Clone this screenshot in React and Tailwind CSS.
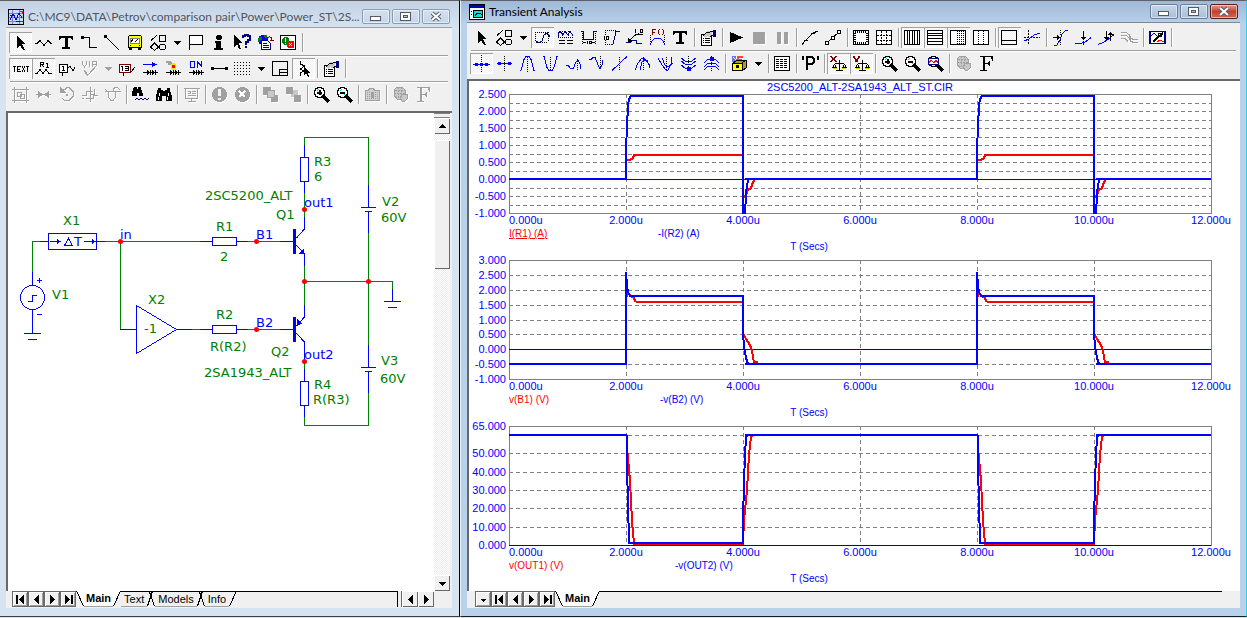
import React, { useState } from "react";

const S = ({ d, c = "#000", w = 1, dash }) => (
  <path d={d} stroke={c} strokeWidth={w} strokeDasharray={dash} fill="none" />
);
const F = ({ d, c = "#000" }) => <path d={d} fill={c} />;

const GREY = "#a0a0a0";
const BLUE = "#0000ff";
const NAVY = "#000080";

const arrow = "M5 2v12l3-3 3 5h2l-3-6h4z";
const zoomGlass = (
  <>
    <circle cx="6.5" cy="6.5" r="5" fill="#fff" stroke="#000" strokeWidth="1.5" />
    <S d="M3.5 5.5l2-2M8 9l1-1" c="#00d8e8" />
    <S d="M10 10l6 6" w={3} />
  </>
);
const scale = (
  <>
    <F d="M2 12h5v2H3zM12 12h5l-1 2h-4z" c="#d8d000" />
    <S d="M9.5 5v10M6 15.5h7M5 8.5h9M4.5 9v1M3.5 10v2M5.5 10v2M14.5 9v1M13.5 10v2M15.5 10v2M2 12.5h5M12 12.5h5" />
  </>
);
const props = (
  <>
    <path d="M1.5 5.5h10v11h-10z" fill="#fff" stroke="#000" />
    <S d="M3 9.5h1M5 9.5h5M3 11.5h1M5 11.5h5M3 13.5h1M5 13.5h5" />
    <F d="M3 6l4-4h5v4l-3 2-2-1-2 2z" c="#c8c8c8" />
    <S d="M3 7l4-4h3l3-1M10 8l3-2" />
    <F d="M13 1h3v7h-3z" c={NAVY} />
  </>
);
const shapes = (
  <>
    <S d="M1 6.5L7 1M9.5 1.5h6v6h-6zM4.5 9l4 4-4 3.5-4-3.5z" />
    <circle cx="12.5" cy="13" r="3" fill="none" stroke="#000" />
  </>
);
const globeGrey = (
  <>
    <path d="M5 1h5l3 3v5l-3 4H5L2 9V4z" fill="#c8c8c8" stroke={GREY} />
    <S d="M3 4.5h10M2 7.5h11M6.5 1v11M9.5 1v11" c={GREY} dash="2 1" />
    <path d="M9.5 8.5h6v4l-3 3h-2l-2-3z" fill="#c8c8c8" stroke={GREY} />
  </>
);
const serifF = "M2 1h13v5h-1l-1-4H7v6h3l1-2h1v5h-1l-1-2H7v6h2v1H2v-1h3V2H2z";
// Diode pair under the current, power and state icons
const diodes = (
  <>
    <S d="M1 12.5h15M8.5 10v5M13.5 10v5" />
    <F d="M5 10v5l3-2.5zM10 10v5l3-2.5z" />
  </>
);

const ICONS = {
  arrow: <F d={arrow} />,
  zigzag: <S d="M0 9.5h2l3-3 4 5 4-5 3 3h1" />,
  text: <F d="M1 2h14v4h-1l-1-2H9.5v9H12v2H4v-2h2.5V4H3L2 6H1z" />,
  wire: (
    <>
      <F d="M0 2h3v3H0z" />
      <S d="M2 3.5h6.5v10H16" />
    </>
  ),
  diagonal: (
    <>
      <F d="M0 1h3v3H0z" />
      <S d="M1 2l14 14" />
    </>
  ),
  face: (
    <>
      <path d="M1.5 2.5l1-1h11l1 1v11h-13z" fill="#ffff00" stroke="#000" />
      <path d="M3.5 4.5h9v5h-9z" fill="#fff" stroke="#808080" />
      <S d="M4 7.5l2-2M8 8l3-3M3 11.5h1M12 11.5h1" />
      <F d="M2 14h3v2H2zM11 14h3v2h-3z" />
    </>
  ),
  shapes,
  flag: (
    <>
      <path d="M1.5 1.5h13v9h-13z" fill="#fff" stroke="#000" />
      <S d="M1.5 10v6" />
    </>
  ),
  info: <F d="M6 1h4v1h1v3h-1v1H6V5H5V2h1zM4 7h6v7h2v2H3v-2h2V9H4z" />,
  help: (
    <>
      <F d="M0 1v12l3-3 2 5h2L5 9h3z" />
      <S d="M9 4V2h2V1h3v1h2v4h-2v2h-2v3M11 13h2" c={NAVY} w={2} />
    </>
  ),
  globeDoc: (
    <>
      <circle cx="6" cy="6" r="5" fill="#0000ff" />
      <F d="M2 3h3v3H3v2H1V5zM7 1h3v3H8z" c="#008000" />
      <S d="M10 4c3-2 5-1 5 2M13 6h4" c="#800000" />
      <path d="M4.5 6.5h6l3 3v6h-9z" fill="#fff" stroke={NAVY} />
      <S d="M6 9.5h4M6 11.5h6M6 13.5h6" c={NAVY} />
    </>
  ),
  enable: (
    <>
      <path d="M.5 1.5h15v14H.5z" fill="#fff" stroke="#000" />
      <F d="M4 3h3l2 2v4l-2 2H4L2 9V5z" c="#008000" />
      <S d="M5.5 4v4M5.5 9v1" c="#fff" />
      <F d="M8 7h5l1 1v5l-1 1H8l-1-1V8z" c="#ff0000" />
      <S d="M9 9l3 3M12 9l-3 3" c="#fff" />
    </>
  ),
  textLabel: (
    <S d="M.5 6.5h3M2 6v6M8.5 6.5h-3.5v5h3.5M5 9h3M10 6l3 6M13 6l-3 6M14 6.5h3M15.5 6v6" />
  ),
  r1: (
    <>
      <S d="M5.5 7V2.5h3v2h-3M7 5l2 2M11 3.5h1.5V7M11 7h3" />
      <S d="M0 13.5h2l3-4 3 4 3-4 3 4h3" />
    </>
  ),
  node1: (
    <>
      <path d="M1.5 4.5h8v8h-8z" fill="#fff" stroke="#000" />
      <S d="M5.5 6v5M4 6.5h2M4 10.5h3M4.5 13v3M9 8.5l3-2 3 4 2-3" />
    </>
  ),
  vip: <S d="M1.5 1v3l2 3 2-3V1M8.5 1v6M11.5 7V1.5h4v3h-4M3 10l4 5 9-10M3 11l4 5" c={GREY} />,
  pin13: (
    <>
      <path d="M.5 4.5h11v8H.5z" fill="#fff" stroke="#800000" />
      <S d="M3.5 6v5M2 6.5h2M6 6.5h3v4H6M6 8.5h3M4.5 13v3M12 12l4-5" />
    </>
  ),
  current: (
    <>
      <S d="M1 4.5h14" c={BLUE} />
      <F d="M10 2h1v1h2v1h2v1h-2v1h-2v1h-1z" c={BLUE} />
      {diodes}
    </>
  ),
  power: (
    <>
      <S d="M1 2h4l2 2M3 4h3" c={GREY} w={2} />
      <F d="M7 3h3v1h1v5h-1v1H7V9H6V4h1z" c="#ffe000" />
      <F d="M7 5h3v3H7z" c="#ff0000" />
      {diodes}
    </>
  ),
  on: (
    <>
      <S d="M2.5 1.5h4v6h-4zM9.5 8V1.5l4 5V1" c={BLUE} />
      {diodes}
    </>
  ),
  line: (
    <>
      <S d="M1 8.5h15" />
      <F d="M0 7h3v3H0zM14 7h3v3h-3z" />
    </>
  ),
  dots: <S d="M0 2.5h17M0 5.5h17M0 8.5h17M0 11.5h17M0 14.5h17" dash="1 2" />,
  titleBlock: <S d="M.5 1.5h15v14H.5zM7.5 15.5v-6h8M8 12.5h8" />,
  cursor: (
    <>
      <S d="M5.5 1v3l4 2-4 3 3 2-3 2v3" />
      <F d="M9 7v8l2-2 2 4h1l-1-4h2z" />
    </>
  ),
  props,
  group: (
    <S d="M2.5 3.5h12v11h-12zM0 3.5h2M15 3.5h2M0 14.5h2M15 14.5h2M2.5 1v2M14.5 1v2M2.5 15v2M14.5 15v2M5.5 6.5h4v4h-4zM8.5 8.5h4v4h-4z" c={GREY} />
  ),
  mirror: (
    <>
      <S d="M1 8.5h15" c={GREY} />
      <F d="M3 5l5 3.5L3 12zM14 5L9 8.5l5 3.5z" c={GREY} />
    </>
  ),
  rotate: (
    <>
      <S d="M5 3.5h2l2-2h2l4 4v5l-4 4H7l-3-2" c={GREY} />
      <F d="M2 1v6h6zM8 8h2v2H8z" c={GREY} />
    </>
  ),
  flipY: <S d="M1 9.5h4v-4h7M5 12.5h7v-3h5M9.5 1v15M13 3v5h-3M1 12.5h2" c={GREY} />,
  flipX: <S d="M1 5.5h16M9.5 5V3l2-2h2l2 3M4.5 6v5l2 3h3l2-3V6M1 3l3 3" c={GREY} />,
  findNext: (
    <>
      <F d="M2 1h3v2l1 1V1h3v2l2 5v2H7V7H5v3H0V7z" />
      <S d="M3 14l2-2 2 2 2-2 2 2 2-2 2 2 2-2" c={NAVY} />
    </>
  ),
  find: (
    <>
      <F d="M3 2h3v2h1l2 1 2-1h1V2h3v2l2 6v5h-6v-5H7v5H1v-5z" />
      <S d="M4 7v3M3 11v3M13 7v3M12 11v3" c="#fff" />
    </>
  ),
  board: <S d="M.5 2.5h16M2.5 3v9h12V3M8.5 12v4M5 15.5h8M5 5.5h2v2H5M9 7.5h4M5 9.5h8M9 5.5h4" c={GREY} />,
  warn: (
    <>
      <circle cx="8.5" cy="8.5" r="7.5" fill={GREY} />
      <F d="M7 3h3v7H7zM7 12h3v2H7z" c="#f0f0f0" />
    </>
  ),
  stopX: (
    <>
      <circle cx="8.5" cy="8.5" r="7.5" fill={GREY} />
      <S d="M5 5l6 6M11 5l-6 6" c="#fff" w={2} />
    </>
  ),
  front: (
    <>
      <F d="M1 1h8v8H1zM9 9h7v7H9z" c={GREY} />
      <path d="M5.5 4.5h7v7h-7z" fill="#c8c8c8" stroke={GREY} />
    </>
  ),
  back: (
    <>
      <F d="M1 1h7v7H1zM9 9h7v7H9z" c={GREY} />
      <F d="M6 4h7v7H6z" c="#c8c8c8" />
      <F d="M1 1h7v7H1zM9 9h7v7H9z" c={GREY} />
    </>
  ),
  zoomIn: (
    <>
      {zoomGlass}
      <S d="M4 6.5h5M6.5 4v5" w={2} />
    </>
  ),
  zoomOut: (
    <>
      {zoomGlass}
      <S d="M4 6.5h5" w={2} />
    </>
  ),
  zoomFit: (
    <>
      {zoomGlass}
      <path d="M1.5 3.5h10v6h-10z" fill="#fff" stroke={NAVY} />
      <S d="M2 8l2-3 3 3 2-3 2 3" c="#ff0000" />
    </>
  ),
  folder: (
    <>
      <path d="M1.5 4.5h3l1-2h4l1 2h5v10h-14z" fill="#d0d0d0" stroke={GREY} />
      <S d="M3 6.5h11M3 8.5h11M3 10.5h11M3 12.5h11" c={GREY} dash="1 1" />
      <F d="M7 6h3v6H7z" c={GREY} />
    </>
  ),
  globeGrey,
  fontGrey: <F d={serifF} c={GREY} />,
  font: <F d={serifF} />,
  scope: (
    <>
      <S d="M1.5 3v10M1 3.5h13M14.5 3v10M2 13.5h12" dash="1 1" />
      <S d="M2 12l3 2 3-2 2-6 3-2 3 4" c={NAVY} />
    </>
  ),
  waveList: (
    <>
      <S d="M1 9V5l2-3 3 4 2-4 3 4 2-4 3 5" c={NAVY} />
      <S d="M1 8.5h15M5.5 2v6M11.5 2v6" dash="1 1" />
      <S d="M2 11.5h6M10 11.5h6M2 14.5h6M10 14.5h6" />
    </>
  ),
  widthBox: (
    <>
      <S d="M1 2.5h2.5v8h10v-8h3" c={NAVY} />
      <S d="M2.5 4v11M15.5 4v11" dash="1 1" />
      <S d="M3 13.5h3M12 13.5h3M7.5 12v3M9.5 12.5h2v2h-2z" />
    </>
  ),
  heightBox: (
    <>
      <S d="M8 15.5h2l3-13h4" c={NAVY} />
      <S d="M2 1.5h12M2 15.5h6M2.5 11v5M2.5 1v5" dash="1 1" />
      <S d="M1.5 7v4M3.5 7.5h2v3h-2z" />
    </>
  ),
  tag: (
    <>
      <S d="M0 13.5h4v-2h6v3h6" c={NAVY} />
      <S d="M3 11.5l7-6h7M9.5 0v4M11.5 4h1M14 .5h2v3h-2z" />
      <F d="M2 9v4h4z" />
    </>
  ),
  formula: (
    <>
      <S d="M3.5 6V.5H7M4 3.5h2M10.5 0l-1 2v2l1 2M13.5 0l1 2v2l-1 2" c="#800000" />
      <S d="M1 16l2-4 3-3h5l3 3 2 4" c={BLUE} />
      <S d="M1.5 6v9M15.5 6v9" dash="1 1" />
    </>
  ),
  play: <F d="M2 3l13 5.5L2 14z" />,
  stop: <F d="M2 3h12v12H2z" c={GREY} />,
  pause: <F d="M3 3h4v12H3zM10 3h4v12h-4z" c={GREY} />,
  slope: (
    <>
      <S d="M0 15.5L4 11 11 4l5-2" />
      <S d="M2 11.5h4M9 4.5h4" />
    </>
  ),
  points: (
    <>
      <S d="M1 15L15 2" />
      <path d="M.5 12.5h3v3h-3zM6.5 7.5h3v3h-3zM12.5 1.5h3v3h-3z" fill="#fff" stroke="#000" />
    </>
  ),
  ruler: (
    <>
      <path d="M.5 1.5h15v14H.5z" fill="#fff" stroke="#000" />
      <S d="M2 3h12M2 14h12" w={2} dash="1 1" />
      <S d="M2 4v9M14 4v9" w={2} dash="1 1" />
    </>
  ),
  grid: (
    <>
      <path d="M.5 1.5h15v14H.5z" fill="#fff" stroke="#000" />
      <S d="M5.5 2v13M10.5 2v13M1 6.5h14M1 11.5h14" dash="2 1" />
    </>
  ),
  vLines: (
    <>
      <path d="M.5 1.5h15v14H.5z" fill="#fff" stroke="#000" />
      <S d="M3.5 2v13M5.5 2v13M8.5 2v13M10.5 2v13M13.5 2v13" />
    </>
  ),
  hLines: (
    <>
      <path d="M.5 1.5h15v14H.5z" fill="#fff" stroke="#000" />
      <S d="M1 4.5h15M1 6.5h15M1 9.5h15M1 12.5h15" />
    </>
  ),
  logLines: (
    <>
      <path d="M.5 1.5h15v14H.5z" fill="#fff" stroke="#000" />
      <S d="M7.5 2v13M9.5 2v13M11.5 2v13M13.5 2v13" dash="1 1" />
    </>
  ),
  midLines: (
    <>
      <path d="M.5 1.5h15v14H.5z" fill="#fff" stroke="#000" />
      <S d="M5.5 2v13M10.5 2v13" dash="1 1" />
    </>
  ),
  baseline: <S d="M.5 1.5h15v14H.5zM1 11.5h15" />,
  crossSlope: (
    <>
      <S d="M4.5 1v15M0 8.5h16" dash="2 1" />
      <S d="M0 12l5-2 5-4 6-2" c={BLUE} />
    </>
  ),
  edge1: (
    <>
      <S d="M2 16h3l3-5 2-6 4-4h2" c={BLUE} />
      <S d="M8.5 1v5M8.5 11v5" dash="1 1" />
      <S d="M1 8.5h5" />
      <F d="M5 6l4 2.5L5 11z" />
    </>
  ),
  edge2: (
    <>
      <S d="M0 14.5h6l5-2 5-4" c={BLUE} />
      <S d="M8.5 2v8M8.5 12v4" />
      <F d="M6 8h5l-2.5 3z" />
    </>
  ),
  edge3: (
    <>
      <S d="M0 15.5l5-2 5-3 6-5" c={BLUE} />
      <S d="M8.5 2v8M12.5 3v9" />
      <F d="M6 8h5l-2.5 3zM10 6l2.5-3L15 6z" />
    </>
  ),
  curves: <S d="M0 3.5h5l3 2 2 4 3 1h4M0 6.5h5l3 2 2 4 3 1h4M0 9.5h4l3 3" c={GREY} />,
  chartEdit: (
    <>
      <path d="M1 2.5h15v12H1z" fill="#fff" stroke={NAVY} strokeWidth="1.5" />
      <S d="M2 7l3-3 3 3" c={BLUE} />
      <S d="M8 13l3-2 4 2" c="#ff0000" />
      <S d="M4 13l5-5 5-4" w={2} />
      <circle cx="11" cy="6" r="2" fill="none" stroke="#000" />
    </>
  ),
  cursorMain: (
    <>
      <S d="M8.5 0v17" dash="1 1" />
      <S d="M0 9.5h17" c={BLUE} />
      <F d="M2 8h3v3H2zM7 8h3v3H7zM12 8h3v3h-3z" c={BLUE} />
    </>
  ),
  cursorStep: (
    <>
      <S d="M8.5 1v15" dash="1 1" />
      <S d="M1 8.5h15" c={BLUE} />
      <F d="M2 7h3v3H2zM12 7h3v3h-3z" c={BLUE} />
    </>
  ),
  peak: (
    <>
      <S d="M8.5 2v15" dash="1 1" />
      <S d="M1 15.5h1l3-11 2-3h3l2 3 3 11h1" c={BLUE} />
    </>
  ),
  valley: (
    <>
      <S d="M8.5 2v13" dash="1 1" />
      <S d="M1 1.5h1l3 11 2 3h3l2-3 3-11h1" c={BLUE} />
    </>
  ),
  high: (
    <>
      <S d="M12.5 4v12" dash="1 1" />
      <S d="M1 11l2-1 2 3 3 1 3-7 2-2 2 4 1 5" c={BLUE} />
    </>
  ),
  low: (
    <>
      <S d="M12.5 1v12" dash="1 1" />
      <S d="M1 4l2 1 2-3h2l3 8 2 4 2-4 1-5" c={BLUE} />
    </>
  ),
  inflect: (
    <>
      <S d="M8.5 2v14" dash="1 1" />
      <S d="M1 15.5L16 1.5" c={BLUE} />
    </>
  ),
  globalHigh: (
    <>
      <S d="M9.5 2v14" dash="1 1" />
      <S d="M1 15l3-7 4-5h2l3 4 3 3M6 15l2-8 3-2h2l3 8" c={BLUE} />
    </>
  ),
  globalLow: (
    <>
      <S d="M9.5 2v14" dash="1 1" />
      <S d="M1 3l4 7 4 5h2l3-6 1-7M5 3l3 7 3 2 5-4" c={BLUE} />
    </>
  ),
  cursorsBottom: (
    <>
      <S d="M8.5 1v15" dash="1 1" />
      <S d="M1 3l4 3h7l4-3M1 6l4 3h7l4-3M1 10l4 3h7l4-3" c={BLUE} />
      <F d="M7 12h4v4H7z" c={BLUE} />
    </>
  ),
  cursorsTop: (
    <>
      <S d="M8.5 1v15" dash="1 1" />
      <S d="M1 8l4-4h7l4 4M1 12l4-4h7l4 4M1 15l4-4h7l4 4" c={BLUE} />
      <F d="M7 2h4v4H7z" c={BLUE} />
    </>
  ),
  chest: (
    <>
      <F d="M1 1h6v6H1z" c="#6078ff" />
      <F d="M7 1h5v6H7z" c="#ff4040" />
      <S d="M2 2l4 4M8 3h3v3M5 1v3" c="#fff" />
      <path d="M1.5 8.5l4-3h10v7l-4 3h-10z" fill="#b0a000" stroke="#000" />
      <path d="M1.5 8.5h10v7h-10z" fill="#ffff00" stroke="#000" />
      <S d="M11 8l4-3" />
      <F d="M5 10h3v3H5z" />
    </>
  ),
  table: (
    <>
      <path d="M.5 1.5h15v14H.5z" fill="#fff" stroke="#000" />
      <S d="M2 4.5h12M2 6.5h12M2 8.5h12M2 10.5h12M2 12.5h12" dash="3 1" />
    </>
  ),
  p: <S d="M1 1v4M16 1v4M5 15V2h5l2 2v3l-2 2H5" w={2} />,
  xScale: (
    <>
      {scale}
      <F d="M0 1h2v1h1v1h1V2h1V1h2v1H6v1H5v2h1v1h1v1H5V6H4V5H3v1H2v1H0V6h1V5h1V3H1V2H0z" c="#800000" />
    </>
  ),
  yScale: (
    <>
      {scale}
      <F d="M0 1h2v2h1v1h1V3h1V1h2v2H6v1H5v3H2V4H1V3H0z" c="#800000" />
    </>
  ),
};

const LEFT_ROWS = [
  ["*arrow", "zigzag", "text", "wire", "diagonal", "face", "shapes", "v", "flag", "info", "help", "globeDoc", "enable", "|"],
  ["*textLabel", "*r1", "node1", "-vip", "-v", "pin13", "current", "power", "on", "line", "dots", "v", "titleBlock", "*cursor", "|", "props", "|"],
  ["-group", "-mirror", "-rotate", "-flipY", "-flipX", "|", "findNext", "find", "|", "-board", "|", "-warn", "-stopX", "|", "-front", "-back", "|", "zoomIn", "zoomOut", "|", "-folder", "|", "-globeGrey", "-fontGrey"],
];

const RIGHT_ROWS = [
  ["arrow", "shapes", "v", "*scope", "waveList", "widthBox", "heightBox", "tag", "formula", "text", "|", "props", "|", "play", "-stop", "-pause", "|", "slope", "points", "|", "ruler", "grid", "|", "*vLines", "*hLines", "*logLines", "midLines", "|", "*baseline", "crossSlope", "|", "edge1", "edge2", "edge3", "-curves", "|", "chartEdit", "|"],
  ["*cursorMain", "cursorStep", "peak", "valley", "high", "low", "inflect", "globalHigh", "globalLow", "cursorsBottom", "cursorsTop", "|", "chest", "v", "|", "table", "|", "p", "|", "*xScale", "*yScale", "|", "zoomIn", "zoomOut", "zoomFit", "|", "-globeGrey", "font"],
];

// "|" separator, "v" drop arrow, "*" pressed, "-" disabled
function Tool({ item }) {
  const disabled = item[0] === "-";
  const name = item.replace(/^[*-]/, "");
  const [pressed, setPressed] = useState(item[0] === "*");

  if (name === "|") {
    return <span className="mx-[2px] w-px h-[19px] shrink-0 bg-[#a0a0a0] shadow-[1px_0_0_#fff]" />;
  }
  if (name === "v") {
    return (
      <button aria-label="More" disabled={disabled} className="flex w-[15px] h-[21px] shrink-0 items-center justify-center">
        <svg width="7" height="4" shapeRendering="crispEdges">
          <path d="M0 0h7L3.5 4z" fill={disabled ? GREY : "#000"} />
        </svg>
      </button>
    );
  }
  return (
    <button
      aria-label={name}
      aria-pressed={pressed}
      disabled={disabled}
      onClick={() => setPressed(!pressed)}
      className={
        "flex w-[23px] h-[21px] shrink-0 items-center justify-center " +
        (pressed
          ? "bg-[repeating-conic-gradient(#fff_0_25%,#f0f0f0_0_50%)] bg-[length:2px_2px] shadow-[inset_1px_1px_0_#a0a0a0,inset_-1px_-1px_0_#fff]"
          : "")
      }
    >
      <svg
        width="17"
        height="17"
        viewBox="0 0 17 17"
        shapeRendering="crispEdges"
        className={disabled ? "drop-shadow-[1px_1px_0_#fff]" : ""}
      >
        {ICONS[name]}
      </svg>
    </button>
  );
}

function ToolRow({ items, className }) {
  return (
    <div role="toolbar" className={`flex items-center px-[3px] ${className}`}>
      {items.map((item, i) => (
        <Tool key={i} item={item} />
      ))}
    </div>
  );
}

const Rule = () => <div className="mx-1 h-px bg-[#a0a0a0] shadow-[0_1px_0_#fff]" />;

function CaptionButtons({ active }) {
  const look = active ? "border-[#6b7f99] bg-linear-to-b from-[#c5d5e8] to-[#a9c0da]" : "border-[#8c9bb0] bg-linear-to-b from-[#d5e0ee] to-[#c5d5e8]";
  const close = active ? "border-[#5c1f1a] bg-linear-to-b from-[#dd9c8c] via-[#c4402c] to-[#cf6a50]" : look;
  const base = "flex h-[15px] w-[28px] items-center justify-center rounded-[2px] border shadow-[inset_0_0_0_1px_#ffffff80] ";
  return (
    <div className="flex gap-[2px]">
      <button aria-label="Minimize" className={base + look}>
        <svg width="12" height="11" shapeRendering="crispEdges">
          <path d="M.5 5.5h10v4H.5z" fill="#fff" stroke="#53586b" />
        </svg>
      </button>
      <button aria-label="Maximize" className={base + look}>
        <svg width="12" height="11" shapeRendering="crispEdges">
          <path d="M.5 1.5h10v8H.5z" fill="#fff" stroke="#53586b" />
          <path d="M3.5 4.5h4v2h-4z" fill="#a9c0da" stroke="#53586b" />
        </svg>
      </button>
      <button aria-label="Close" className={base + close}>
        <svg width="12" height="11">
          <path d="M2 2l8 7M10 2L2 9" stroke="#53586b" strokeWidth="4" />
          <path d="M2 2l8 7M10 2L2 9" stroke="#fff" strokeWidth="2" />
        </svg>
      </button>
    </div>
  );
}

const NAV = {
  drop: "M5 7h5L7.5 10z",
  down: "M4 6h7l-3.5 4z",
  up: "M4 9h7L7.5 5z",
  first: "M3 3h2v9H3zM11 3v9L6 7.5z",
  prev: "M10 3v9L5 7.5z",
  next: "M5 3v9l5-4.5z",
  last: "M10 3h2v9h-2zM4 3v9l5-4.5z",
};

function NavButton({ kind, boxed }) {
  return (
    <button
      aria-label={kind}
      className={
        "flex size-4 shrink-0 items-center justify-center bg-[#f0f0f0] " +
        (boxed ? "border border-[#696969] shadow-[inset_1px_1px_0_#fff,inset_-1px_-1px_0_#a0a0a0]" : "shadow-[inset_1px_1px_0_#fff,inset_-1px_-1px_0_#696969]")
      }
    >
      <svg width="14" height="14" viewBox="0 0 14 14" className="shrink-0" shapeRendering="crispEdges">
        <path d={NAV[kind]} />
      </svg>
    </button>
  );
}

// Slanted edges between the sheet tabs
function Edge({ type }) {
  return (
    <svg width="8" height="16" className="shrink-0" shapeRendering="crispEdges">
      {type === "start" && (
        <>
          <path d="M0 0h8v15H7z" fill="#fff" />
          <path d="M.5 0l7 15" stroke="#000" />
        </>
      )}
      {type === "end" && (
        <>
          <path d="M0 0h8L1 15H0z" fill="#fff" />
          <path d="M7.5 0l-7 15M7 .5h1" stroke="#000" />
        </>
      )}
      {type === "cross" && <path d="M0 .5h8M5.5 0l-5 15M2.5 1l5 14" stroke="#000" />}
      {type === "last" && <path d="M0 .5h8M7.5 0l-7 15" stroke="#000" />}
    </svg>
  );
}

function MainTab() {
  return (
    <>
      <Edge type="start" />
      <button className="h-4 border-b border-[#a0a0a0] bg-white px-[2px] font-bold leading-none">Main</button>
      <Edge type="end" />
    </>
  );
}

function Sheet({ children }) {
  return <button className="h-4 border-t border-b border-t-black border-b-[#a0a0a0] px-[3px] leading-none">{children}</button>;
}

const WIRES =
  "M32.5 272v-30.5H40M105 241.5h95M120.5 241.5v88M192 329.5h8M248 241.5h32M248 329.5h32M304.5 193v25M304.5 145v-7.5h64V185M368.5 233v112M304.5 265v40M304 281.5h88.5v8M368.5 393v32.5h-64V417M304.5 361v9";
const PARTS =
  "M32.5 272v13M40 241.5h8M48.5 233.5h48v16h-48zM97 241.5h8M200 241.5h12M212.5 237.5h24v8h-24zM236 241.5h12M280 241.5h14M120 329.5h16M136.5 305.5v48l40-24zM177 329.5h15M200 329.5h12M212.5 325.5h24v8h-24zM236 329.5h12M280 329.5h14" +
  "M32.5 309v24M24 333.5h17M28 339.5h9M37 280.5h5M39.5 278v5M37 314.5h5M28 301.5h4.5v-6H37" +
  "M304.5 145v12M300.5 157.5h8v24h-8zM304.5 181v12M304.5 217v12l-8 9M296 245l8.5 9v12M304.5 305v12l-8 9M296 333l8.5 9v19M304.5 369v12M300.5 381.5h8v24h-8zM304.5 405v12" +
  "M368.5 185v22M361 207.5h15M365 211.5h7M368.5 211v22M368.5 345v22M361 367.5h15M365 371.5h7M368.5 371v22M392.5 289v12M384 301.5h17M388 307.5h9" +
  "M50 241.5h10M84 241.5h10M64.5 245.5h8l-4-7z";

const GREEN_LABELS = [
  ["X1", 63, 225], ["R1", 216, 231], ["2", 220, 261], ["Q1", 276, 219], ["2SC5200_ALT", 205, 200],
  ["R3", 314, 166], ["6", 314, 181], ["V2", 382, 206], ["60V", 381, 222], ["V1", 52, 299],
  ["X2", 148, 304], ["-1", 144, 333], ["R2", 216, 319], ["R(R2)", 210, 351], ["Q2", 271, 356],
  ["2SA1943_ALT", 204, 377], ["V3", 381, 365], ["60V", 380, 383], ["R4", 314, 389], ["R(R3)", 313, 404],
];
const NODE_LABELS = [
  ["in", 120, 239], ["B1", 256, 239], ["B2", 256, 327], ["out1", 304, 207], ["out2", 304, 359],
];
const NODES = [[120, 241], [256, 241], [256, 329], [304, 209], [304, 361], [304, 281], [368, 281]];

function Schematic() {
  return (
    <svg viewBox="8 113 426 478" preserveAspectRatio="xMinYMin meet" className="size-full font-['DejaVu_Sans',sans-serif] text-[13px]">
      <g shapeRendering="crispEdges" fill="none">
        <path d={WIRES} stroke="#008000" />
        <path d={PARTS} stroke={BLUE} />
        <circle cx="32.5" cy="297.5" r="12" stroke={BLUE} />
        <path d="M293 229h3v25h-3zM293 317h3v25h-3zM304 248v6h-6zM297 325v-6l5 5zM57 239l4 2.5-4 2.5zM92 239l4 2.5-4 2.5z" fill={BLUE} />
      </g>
      <text x="74" y="246" fill={BLUE}>T</text>
      {GREEN_LABELS.map(([label, x, y]) => (
        <text key={label + y} x={x} y={y} fill="#008000">{label}</text>
      ))}
      {NODES.map(([x, y]) => (
        <circle key={x + "-" + y} cx={x + 0.5} cy={y + 0.5} r="2.5" fill="#ff0000" />
      ))}
      {NODE_LABELS.map(([label, x, y]) => (
        <text key={label} x={x} y={y} fill={BLUE}>{label}</text>
      ))}
    </svg>
  );
}

const PLOT_W = 702;
const PLOT_H = 119;
const PULSES = [0, 351];
const X_TICKS = [0, 2, 4, 6, 8, 10, 12];

// Pulse points are offsets from the rising edge at 2u, y from the plot top
const PLOTS = [
  {
    top: 13,
    max: 2.5,
    min: -1,
    labels: [2.5, 2, 1.5, 1, 0.5, 0, -0.5, -1],
    grid: [2.25, 2, 1.75, 1.5, 1.25, 1, 0.75, 0.5, 0.25, -0.25, -0.5, -0.75],
    rest: 85,
    red: "M0 64l1 2h3l3-2 1-3h109v42h1l2-2 2-5 3-2 2-6 2-3h2",
    blue: "M0 85V56l1-24 1-20 1-7 2-3h112v117h2l1-18 1-11 2-5h4",
    names: ["I(R1) (A)", "-I(R2) (A)", 149],
    underline: true,
  },
  {
    top: 179,
    max: 3,
    min: -1,
    labels: [3, 2.5, 2, 1.5, 1, 0.5, 0, -0.5, -1],
    grid: [2.5, 2, 1.5, 1, 0.5, -0.5],
    rest: 104,
    red: "M0 38l2-5 3 3 3 2 1 3 2 1h106v31l3 6 4 6 2 6 1 6 1 5h4",
    blue: "M0 104V12l1 14 1 6 2 4h113v37l1 13 2 12 2 6h4",
    names: ["v(B1) (V)", "-v(B2) (V)", 151],
  },
  {
    top: 345,
    max: 65,
    min: 0,
    labels: [65, 50, 40, 30, 20, 10, 0],
    grid: [60, 50, 40, 30, 20, 10],
    rest: 9,
    red: "M1 9v12l3 34 2 40 2 23h109l1-24 3-30 2-35 2-18 2-2",
    blue: "M1 9v32l1 35 1 41h114V94l1-37 1-28 1-18 2-2h4",
    names: ["v(OUT1) (V)", "-v(OUT2) (V)", 166],
  },
];

function Plot({ plot }) {
  const y = (v) => Math.round(((plot.max - v) / (plot.max - plot.min)) * PLOT_H) + 0.5;
  const r = plot.rest;
  return (
    <g transform={`translate(40 ${plot.top})`}>
      <g shapeRendering="crispEdges" fill="none">
        {plot.grid.map((v) => (
          <path key={v} d={`M0 ${y(v)}h${PLOT_W}`} stroke="#808080" strokeDasharray="4 3" />
        ))}
        {X_TICKS.slice(1, -1).map((t) => (
          <path key={t} d={`M${t * 58.5 + 0.5} 0v${PLOT_H}`} stroke="#808080" strokeDasharray="4 3" />
        ))}
        <path d={`M.5 .5h${PLOT_W}v${PLOT_H}h-${PLOT_W}z`} stroke="#808080" />
        <path d={`M0 ${y(0)}h${PLOT_W}`} stroke="#0000c0" />
        {PULSES.map((dx) => (
          <path key={dx} d={plot.red} transform={`translate(${117 + dx} 0)`} stroke="#ff0000" strokeWidth="2" />
        ))}
        {PULSES.map((dx) => (
          <path key={dx} d={plot.blue} transform={`translate(${117 + dx} 0)`} stroke={BLUE} strokeWidth="2" />
        ))}
        <path d={`M0 ${r}h118M236 ${r}h233M587 ${r}h115`} stroke={BLUE} strokeWidth="2" />
      </g>
      <g fill={BLUE} fontSize="11">
        {plot.labels.map((v) => (
          <text key={v} x="-3" y={y(v) + 3.5} textAnchor="end">{v.toFixed(3)}</text>
        ))}
        {X_TICKS.map((t) => (
          <text key={t} x={t * 58.5} y="130" textAnchor={t ? "middle" : "start"}>{t.toFixed(3)}u</text>
        ))}
      </g>
      <g fill={BLUE} fontSize="10">
        <text x="0" y="143" fill="#ff0000" textDecoration={plot.underline ? "underline" : undefined}>{plot.names[0]}</text>
        <text x={plot.names[2]} y="143">{plot.names[1]}</text>
        <text x="300" y="156" textAnchor="middle">T (Secs)</text>
      </g>
    </g>
  );
}

function Waveforms() {
  return (
    <svg viewBox="0 0 771 509" preserveAspectRatio="xMinYMin meet" className="size-full font-['Liberation_Sans',sans-serif]">
      <text x="391" y="10" fontSize="11" fill={BLUE} textAnchor="middle">2SC5200_ALT-2SA1943_ALT_ST.CIR</text>
      {PLOTS.map((plot) => (
        <Plot key={plot.top} plot={plot} />
      ))}
    </svg>
  );
}

function SchematicWindow() {
  return (
    <section className="flex min-w-0 flex-col border-t border-r border-b border-t-[#605f66] border-r-black border-b-[#404040] bg-[#d6e4f1] bg-linear-to-b from-[#c3d2e4] to-[#d6e4f1] to-[28px] pl-[6px] pr-[7px] pb-2">
      <header className="flex h-[26px] shrink-0 items-center gap-1 pt-[5px] pl-[2px] pr-[2px]">
        <svg width="16" height="16" shapeRendering="crispEdges" className="shrink-0">
          <path d="M.5 .5h15v15H.5z" fill="#c8dcff" stroke="#000" />
          <path d="M1 4.5h14M1 8.5h14M1 12.5h14M4.5 1v14M11.5 1v14" stroke="#8080c0" />
          <path d="M2 11l3-6 3 6 3-7 3 5M2 6h5M8 12h4" stroke={BLUE} fill="none" />
          <path d="M12 2h2v3M12 12h3" stroke="#ff0000" fill="none" />
        </svg>
        <h1 className="min-w-0 flex-1 whitespace-nowrap font-['Lato',sans-serif] text-[12px] leading-4 text-[#50555e]">
          C:\MC9\DATA\Petrov\comparison pair\Power\Power_ST\2S...
        </h1>
        <CaptionButtons />
      </header>
      <div className="flex min-h-0 flex-1 flex-col border-t border-[#a0a0a0] bg-[#f0f0f0]">
        <ToolRow items={LEFT_ROWS[0]} className="pt-1 pb-[2px]" />
        <Rule />
        <ToolRow items={LEFT_ROWS[1]} className="pt-[2px] pb-[2px]" />
        <Rule />
        <ToolRow items={LEFT_ROWS[2]} className="pt-[2px] pb-[6px]" />
        <div className="flex min-h-0 flex-1 border-t-2 border-l-2 border-t-[#696969] border-l-[#696969]">
          <div className="min-w-0 flex-1 bg-white">
            <Schematic />
          </div>
          <div className="flex w-4 shrink-0 flex-col bg-[repeating-conic-gradient(#fff_0_25%,#ebebeb_0_50%)] bg-[length:2px_2px]">
            <div className="h-[5px] shrink-0 border-y border-[#808080] bg-[#f0f0f0]" />
            <NavButton kind="up" />
            <div className="mt-[6px] h-[129px] bg-[#f0f0f0] shadow-[inset_1px_1px_0_#fff,inset_-1px_-1px_0_#696969]" />
            <div className="mt-auto">
              <NavButton kind="down" />
            </div>
          </div>
          <div className="w-[2px] shrink-0 bg-[#f0f0f0]" />
        </div>
        <div className="flex h-[17px] shrink-0 pl-[6px] pr-[18px] font-['Liberation_Sans',sans-serif] text-[11px] text-black">
          {["first", "prev", "next", "last"].map((k) => (
            <NavButton key={k} kind={k} boxed />
          ))}
          <MainTab />
          <Sheet>Text</Sheet>
          <Edge type="cross" />
          <Sheet>Models</Sheet>
          <Edge type="cross" />
          <Sheet>Info</Sheet>
          <Edge type="last" />
          <div className="mr-[3px] h-4 flex-1 border-t border-r border-black" />
          <div className="w-px h-4 bg-[#696969]" />
          <NavButton kind="prev" />
          <NavButton kind="next" />
        </div>
      </div>
    </section>
  );
}

function AnalysisWindow() {
  return (
    <section className="flex min-w-0 flex-col border border-t-[#605f66] border-r-[#30d0e8] border-b-[#102028] border-l-[#e8f0f8] bg-[#b9d1ea] bg-linear-to-b from-[#9fb8d7] to-[#b9d1ea] to-[23px] px-[6px] pb-2">
      <header className="flex h-[21px] shrink-0 items-center gap-1 pl-[2px] pr-[2px]">
        <svg width="16" height="16" shapeRendering="crispEdges" className="shrink-0">
          <path d="M.5 .5h15v15H.5z" fill="#fff" stroke="#000" />
          <path d="M1 1h14v3H1z" fill="#0000c0" />
          <path d="M4.5 6.5h9v7h-9z" fill="#00e0e8" stroke="#000" />
          <path d="M6 12l2-3h3l2 2M2 7h1M2 10h1" stroke="#000" fill="none" />
        </svg>
        <h2 className="min-w-0 flex-1 whitespace-nowrap font-['Lato',sans-serif] text-[12px] leading-4 text-black">Transient Analysis</h2>
        <CaptionButtons active />
      </header>
      <div className="flex min-h-0 flex-1 flex-col border-t border-[#808890] bg-[#f0f0f0]">
        <ToolRow items={RIGHT_ROWS[0]} className="pt-1 pb-[2px]" />
        <Rule />
        <ToolRow items={RIGHT_ROWS[1]} className="pt-[2px] pb-[5px]" />
        <div className="min-h-0 flex-1 border-t-2 border-l-2 border-t-[#696969] border-l-[#696969] bg-white">
          <Waveforms />
        </div>
        <div className="flex h-[17px] shrink-0 pl-2 pr-[18px] font-['Liberation_Sans',sans-serif] text-[11px] text-black">
          {["drop", "first", "prev", "next", "last"].map((k) => (
            <NavButton key={k} kind={k} boxed />
          ))}
          <MainTab />
          <div className="h-4 flex-1 border-t border-black" />
        </div>
      </div>
    </section>
  );
}

function App() {
  return (
    <main className="grid h-screen grid-cols-[minmax(0,460fr)_minmax(0,787fr)] bg-[#e0e4e8] pb-px">
      <SchematicWindow />
      <AnalysisWindow />
    </main>
  );
}

export default App;
